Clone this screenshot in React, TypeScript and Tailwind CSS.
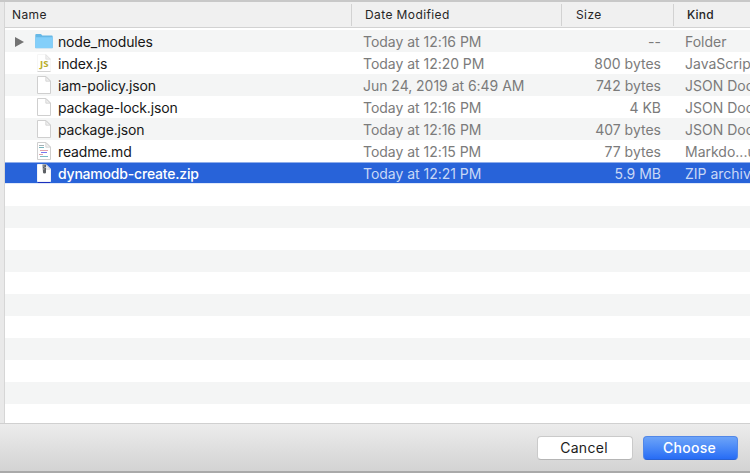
import React from "react";

type Kind = "folder" | "js" | "doc" | "md" | "zip";
type Row = { icon: Kind; name: string; date: string; size: string; kind: string; selected?: boolean };

const rows: Row[] = [
  { icon: "folder", name: "node_modules", date: "Today at 12:16 PM", size: "--", kind: "Folder" },
  { icon: "js", name: "index.js", date: "Today at 12:20 PM", size: "800 bytes", kind: "JavaScript" },
  { icon: "doc", name: "iam-policy.json", date: "Jun 24, 2019 at 6:49 AM", size: "742 bytes", kind: "JSON Doc" },
  { icon: "doc", name: "package-lock.json", date: "Today at 12:16 PM", size: "4 KB", kind: "JSON Doc" },
  { icon: "doc", name: "package.json", date: "Today at 12:16 PM", size: "407 bytes", kind: "JSON Doc" },
  { icon: "md", name: "readme.md", date: "Today at 12:15 PM", size: "77 bytes", kind: "Markdo...u" },
  { icon: "zip", name: "dynamodb-create.zip", date: "Today at 12:21 PM", size: "5.9 MB", kind: "ZIP archiv", selected: true },
];

function FileIcon({ kind }: { kind: Kind }) {
  if (kind === "folder") {
    return (
      <svg className="shrink-0" width="18" height="22" viewBox="0 0 18 22">
        <path d="M0.3 5q0-.9.9-.9h4.300q.7 0 1.200.7l.6.8h9.600q.8 0 .8.800v11q0 .9-.9.900H1.200q-.9 0-.9-.9z" fill="#67b8e6" />
        <path d="M0.300 7.200h17.400v10q0 .7-.8.700H1.100q-.8 0-.8-.7z" fill="#83cffa" />
      </svg>
    );
  }
  const js = kind === "js";
  return (
    <svg className="shrink-0" width="18" height="22" viewBox="0 0 18 22">
      <path
        d="M2.500 2.500h8.500l4.500 4.500v12.500h-13z"
        fill="#fff"
        stroke={js ? "#f6f6f6" : kind === "zip" ? "#f1f3f8" : "#cfcfcf"}
        strokeLinejoin="round"
      />
      <path d="M10.800 2.700v4.500h4.500z" fill="#f0f0f0" stroke={js ? "#dedede" : "#d0d0d0"} strokeWidth=".8" />
      {js && (
        <>
          <path d="M2.500 19.500h13" stroke="#d4d4d4" />
          <text x="5" y="15" fontSize="8" fontWeight="700" textLength="8.500" lengthAdjust="spacingAndGlyphs" fill="#b8ae2c" fontFamily="Open Sans, sans-serif">JS</text>
        </>
      )}
      {kind === "md" && (
        <g strokeWidth="1">
          <path d="M4 5.500h5" stroke="#a5b1b5" />
          <path d="M4 7.500h5" stroke="#76b2bb" />
          <path d="M5 10.500h8" stroke="#e3a2ac" />
          <path d="M6 12.500h6" stroke="#7878ee" />
          <path d="M4 14.500h4" stroke="#dca3ac" />
          <path d="M5 16.500h8" stroke="#79b9c4" />
        </g>
      )}
      {kind === "zip" && (
        <>
          <path d="M7.500 2.500h3.500v8q0 1-1.500 1t-1.500-1z" fill="#5c6064" />
          <path d="M7.500 4h2M9.500 5.500h1.500M7.500 7h2" stroke="#c3c6ca" strokeWidth=".8" />
          <path d="M3 20.500h12" stroke="#1a2fbd" />
        </>
      )}
    </svg>
  );
}

function FileRow({ row, index }: { row: Row | undefined; index: number }) {
  const stripe = index % 2 === 0 ? "bg-[#f4f5f5]" : "bg-white";
  if (!row) return <div className={"h-[22px] shrink-0 " + stripe} />;
  const tone = row.selected
    ? "border-y border-t-[#8fadea] border-b-[#dfe8fa] bg-[#2863d9] text-[#c9d8f6]"
    : stripe + " text-[#7b7b7b]";
  return (
    <div className={"flex h-[22px] shrink-0 items-center overflow-hidden whitespace-nowrap text-[14px] leading-[20px] " + tone}>
      <div className="flex w-[30px] shrink-0 justify-center pt-px pr-[2px]">
        {row.icon === "folder" && (
          <svg width="9" height="10" viewBox="0 0 9 10">
            <path d="M0 0l9 5-9 5z" fill="#737373" />
          </svg>
        )}
      </div>
      <FileIcon kind={row.icon} />
      <div className={"ml-[5px] w-[305px] shrink-0 pt-[1px] " + (row.selected ? "font-medium tracking-[-0.2px] text-white" : "tracking-[-0.16px] text-[#171717]")}>
        {row.name}
      </div>
      <div className="w-[199px] shrink-0 pt-[1px] tracking-[-0.03px]">{row.date}</div>
      <div className="w-[99px] shrink-0 pt-[1px] text-right">{row.size}</div>
      <div className="ml-6 shrink-0 pt-[1px]">{row.kind}</div>
    </div>
  );
}

export default function App() {
  return (
    <div className="flex h-[473px] w-[750px] flex-col overflow-hidden bg-[#e9e9e9] font-[Inter,sans-serif]">
      <div className="h-[2px] shrink-0 bg-[#c8c8c8]" />
      <div className="flex h-[421px] shrink-0">
        <div className="w-[5px] shrink-0 border-r border-[#d6d6d6] bg-[#e9e9e9]" />
        <div className="flex min-w-0 flex-1 flex-col overflow-hidden bg-white">
          <div className="flex h-[26px] shrink-0 items-center border-b border-[#d2d2d2] bg-[#f0f0f0] text-[12px] tracking-[0.4px] text-[#262626]">
            <div className="w-[346px] shrink-0 pl-[7px]">Name</div>
            <div className="h-[22px] w-px shrink-0 bg-[#d2d2d2]" />
            <div className="w-[209px] shrink-0 pl-[13px]">Date Modified</div>
            <div className="h-[22px] w-px shrink-0 bg-[#d2d2d2]" />
            <div className="w-[111px] shrink-0 pl-[14px]">Size</div>
            <div className="h-[22px] w-px shrink-0 bg-[#d2d2d2]" />
            <div className="pl-[13px] font-medium tracking-[0.2px]">Kind</div>
          </div>
          <div className="h-[2px] shrink-0" />
          {Array.from({ length: 18 }, (_, i) => (
            <FileRow key={i} row={rows[i]} index={i} />
          ))}
        </div>
      </div>
      <div className="flex h-[48px] shrink-0 items-start justify-end gap-[10px] border-t border-[#d0d0d0] bg-linear-to-b from-[#ececec] to-[#d3d3d3] pt-[12px] pr-[12px] text-[14px] leading-[20px] tracking-[0.3px]">
        <button className="h-[24px] w-[96px] rounded-[4px] border border-[#cacaca] border-b-[#b5b5b5] bg-white pr-[2px] text-[#1c1c1c]">Cancel</button>
        <button className="h-[24px] w-[95px] rounded-[4px] border border-[#5187e8] border-b-[#2861d5] bg-linear-to-b from-[#6ca3f8] to-[#276cf5] pr-[2px] font-medium text-white">Choose</button>
      </div>
      <div className="h-[2px] shrink-0 bg-[#a9a9a9]" />
    </div>
  );
}
